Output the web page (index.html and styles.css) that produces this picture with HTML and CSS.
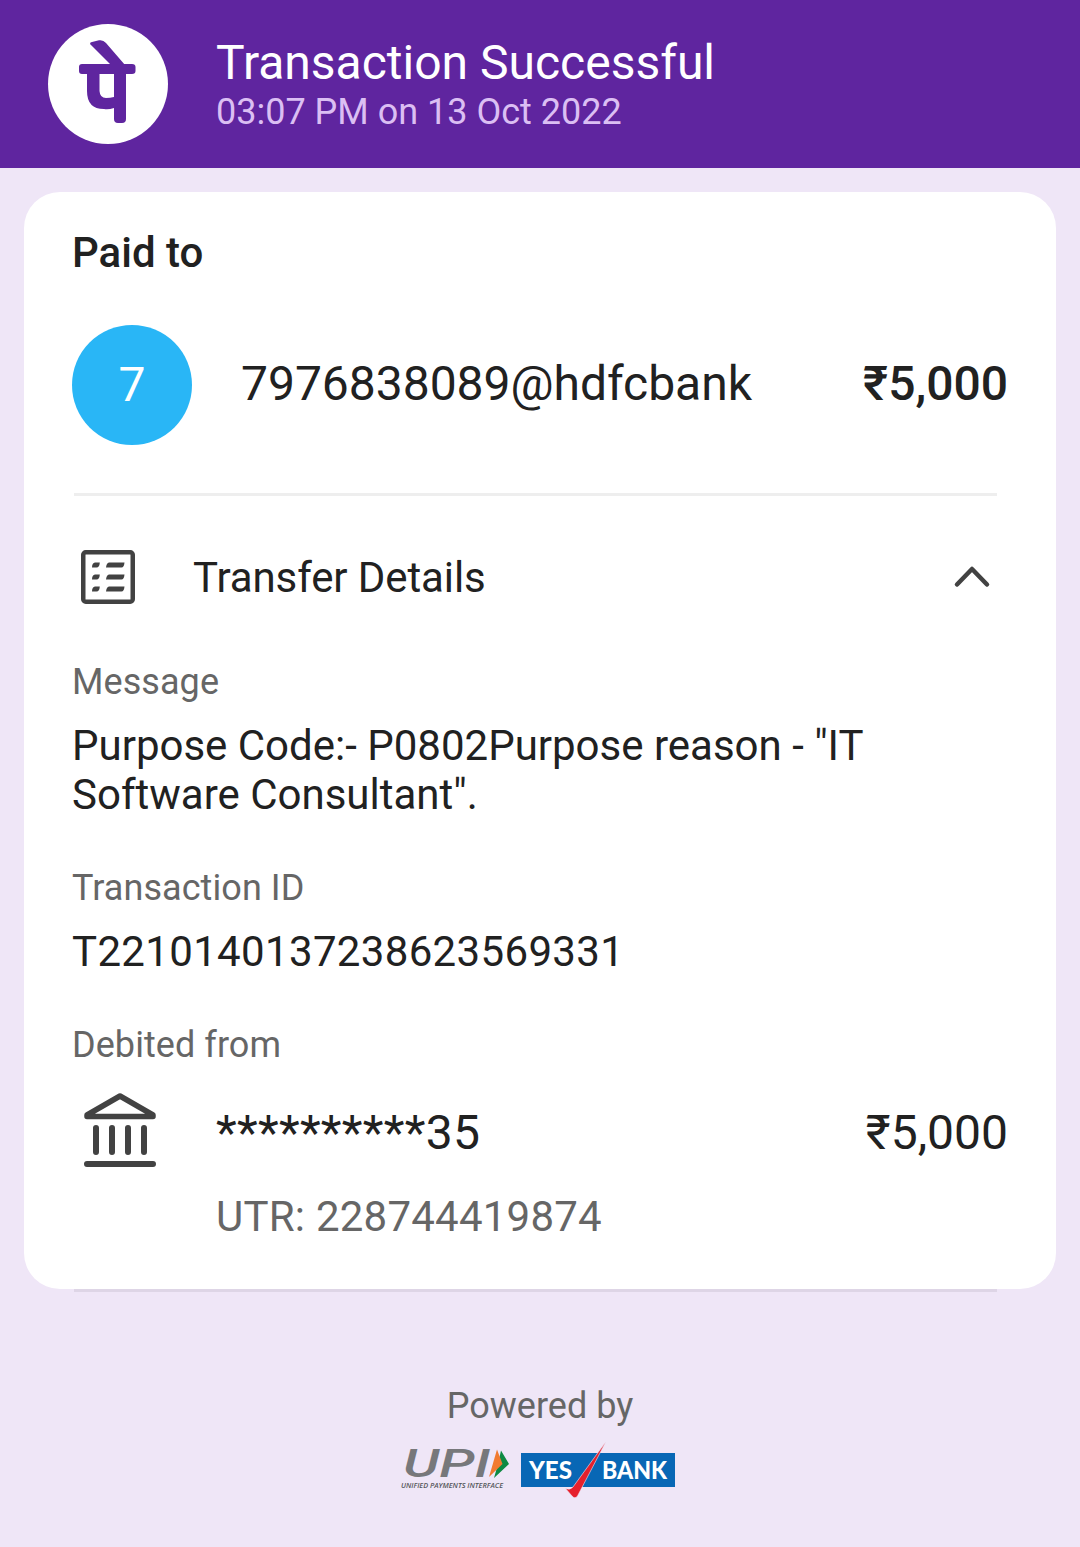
FILE: index.html
```html
<!DOCTYPE html>
<html lang="en">
<head>
<meta charset="utf-8">
<title>Transaction Successful</title>
<link rel="stylesheet" href="styles.css">
</head>
<body>
<header class="header">
  <svg class="brand" viewBox="0 0 120 120" aria-label="PhonePe">
    <circle cx="60" cy="60" r="60" fill="#fff"/>
    <g fill="#5f259f">
      <path d="M42 20Q42 18 44 18L51 16.300Q55 15.500 58 19L77 41H63Z"/>
      <path d="M34 40H84Q87.500 40 87.500 43V47Q87.500 50 84 50H78V95Q78 99 74 99H70Q66 99 66 95V84Q60 86 56 85Q39 85 39 67V50H34Q31 50 31 47V43Q31 40 34 40ZM51.500 50V67Q52 74 58 74Q62 74 66 73V50Z" fill-rule="evenodd"/>
    </g>
  </svg>
  <div class="heading">
    <h1 class="title">Transaction Successful</h1>
    <p class="time">03:07 PM on 13 Oct 2022</p>
  </div>
</header>
<main class="card">
  <h2 class="paid">Paid to</h2>
  <div class="payee">
    <div class="avatar">7</div>
    <span class="vpa">7976838089@hdfcbank</span>
    <span class="amount strong">₹5,000</span>
  </div>
  <div class="divider"></div>
  <div class="details">
    <svg class="list-icon" viewBox="0 0 54 54" fill="none" stroke="#424242" stroke-width="4.500">
      <rect x="2.250" y="2.250" width="49.500" height="49.500" rx="2.500"/>
      <g fill="#424242" stroke="none">
        <path id="dash" d="M14 12.500H18.800Q18.500 17.500 15.500 17.500H11Q11 13 14 12.500ZM28 12.500H43.500Q43 17.500 40.500 17.500H25Q25.500 13 28 12.500Z"/>
        <use href="#dash" y="12"/>
        <use href="#dash" y="24"/>
      </g>
    </svg>
    <h3 class="details-title">Transfer Details</h3>
    <svg class="chevron" viewBox="0 0 36 22" fill="none" stroke="#424242" stroke-width="4.500" stroke-linecap="round" stroke-linejoin="round"><path d="M3 18.500L18 3L33 18.500"/></svg>
  </div>
  <p class="label">Message</p>
  <p class="value">Purpose Code:- P0802Purpose reason - "IT<br>Software Consultant".</p>
  <p class="label">Transaction ID</p>
  <p class="value transaction">T2210140137238623569331</p>
  <p class="label">Debited from</p>
  <div class="account">
    <svg class="bank" viewBox="0 0 72 74" fill="none" stroke="#424242" stroke-width="6" stroke-linecap="round" stroke-linejoin="round">
      <path d="M3 22L36 3L69 22V23.500H3Z" stroke-width="5.500"/>
      <path d="M12 35V59M28 35V59M44 35V59M60 35V59M3 71H69"/>
    </svg>
    <span class="masked">**********35</span>
    <span class="amount">₹5,000</span>
  </div>
  <p class="utr">UTR: 228744419874</p>
</main>
<div class="divider edge"></div>
<footer class="footer">
  <p class="powered">Powered by</p>
  <div class="logos">
    <svg class="upi" viewBox="0 0 112 60">
      <text x="3" y="37" class="upi-name" textLength="87" lengthAdjust="spacingAndGlyphs">UPI</text>
      <path d="M101 10.500L109 24L94 38L98 24Z" fill="#0e8a43"/>
      <path d="M97 9.500L102.500 24L89 37Z" fill="#f27a30"/>
      <text x="1" y="48" class="upi-full" textLength="102" lengthAdjust="spacingAndGlyphs">UNIFIED PAYMENTS INTERFACE</text>
    </svg>
    <svg class="yes" viewBox="0 0 156 60">
      <rect x="1" y="13" width="154" height="34" fill="#0867b5"/>
      <text x="9" y="38.500" class="yes-name" textLength="43" lengthAdjust="spacingAndGlyphs">YES</text>
      <text x="82" y="38.500" class="yes-name" textLength="65" lengthAdjust="spacingAndGlyphs">BANK</text>
      <path d="M86 1.500L57.500 56Q55 59.500 52 56L45.500 48.500Q50 50.500 53 47Z" fill="#e6202c" stroke="#efe6f7" stroke-width=".6"/>
    </svg>
  </div>
</footer>
</body>
</html>
```
FILE: styles.css
```css
* { box-sizing: border-box; }
body { margin: 0; background: #efe6f7; color: #212121; font-family: Roboto, "Noto Sans", sans-serif; }
h1, h2, h3, p { margin: 0; font-weight: 400; }
svg { display: block; flex: none; overflow: visible; }
.header { display: flex; align-items: center; gap: 48px; height: 168px; padding: 0 48px; background: #5f259f; color: #fff; }
.brand { width: 120px; height: 120px; }
.title { font-size: 48px; line-height: 56px; }
.time { font-size: 36px; line-height: 42px; color: #dbbff3; }
.card { height: 1097px; margin: 24px 24px 0; padding: 36px 48px 0; border-radius: 36px; background: #fff; }
.paid { font-size: 42px; line-height: 49px; font-weight: 500; }
.payee { display: flex; align-items: center; height: 120px; margin-top: 48px; }
.avatar { display: flex; align-items: center; justify-content: center; width: 120px; height: 120px; margin-right: 49px; padding-bottom: 2px; border-radius: 50%; background: #29b6f6; color: #fff; font-size: 48px; }
.vpa, .masked, .amount { font-size: 48px; line-height: 56px; }
.vpa { letter-spacing: -0.03px; }
.payee .vpa, .payee .amount { padding-bottom: 2px; }
.amount { margin-left: auto; }
.strong { font-weight: 500; }
.divider { height: 3px; margin: 48px 11px 0 2px; background: #eee; }
.details { display: flex; align-items: center; height: 66px; margin: 48px 18px 51px 9px; }
.list-icon { width: 54px; height: 54px; }
.details-title { margin-left: 58px; font-size: 42px; line-height: 49px; letter-spacing: -0.1px; }
.chevron { width: 36px; height: 22px; margin-left: auto; }
.label { font-size: 36px; line-height: 42px; letter-spacing: 0.07px; color: #666; }
.value { margin: 18px 0 48px; font-size: 42px; line-height: 49px; }
.transaction { letter-spacing: 0.34px; }
.account { display: flex; align-items: center; height: 80px; margin-top: 26px; padding-left: 12px; }
.bank { width: 72px; height: 74px; margin-bottom: 4px; }
.masked { margin-left: 60px; letter-spacing: 0.3px; }
.account .masked, .account .amount { padding-top: 2px; }
.utr { margin: 20px 0 0 144px; font-size: 42px; line-height: 49px; letter-spacing: 0.23px; color: #666; }
.edge { margin: 0 83px 0 74px; background: #ded5e6; }
.footer { display: flex; flex-direction: column; align-items: center; padding-top: 93px; }
.powered { font-size: 36px; line-height: 42px; color: #666; }
.logos { display: flex; gap: 8px; margin: 13px 4px 0 0; }
.upi { width: 112px; height: 60px; }
.yes { width: 156px; height: 60px; }
.upi-name { font: italic 500 38px Roboto, sans-serif; fill: #77787b; }
.upi-full { font: italic 600 7.5px "Open Sans", sans-serif; fill: #55565a; }
.yes-name { font: 900 25px Lato, sans-serif; fill: #fff; }
```
